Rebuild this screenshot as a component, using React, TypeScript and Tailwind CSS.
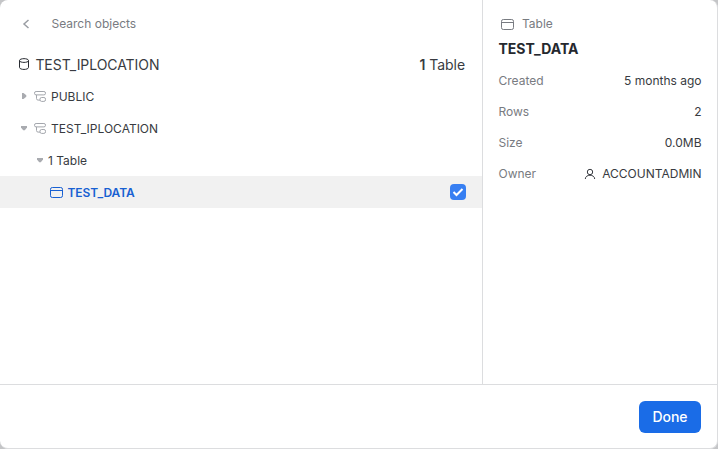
import type { ReactNode } from "react";

function TableIcon({ className }: { className?: string }) {
  return (
    <svg width="13" height="11" viewBox="0 0 13 11" fill="none" stroke="currentColor" className={className}>
      <rect x="0.5" y="0.5" width="12" height="10" rx="1.8" />
      <path d="M0.5 3.5h12" />
    </svg>
  );
}

function SchemaIcon() {
  return (
    <svg width="12" height="11" viewBox="0 0 12 11" fill="none" stroke="#a3a6ac" className="block shrink-0">
      <rect x="0.5" y="0.5" width="11" height="3.4" rx="1.6" />
      <path d="M2.5 3.9v3.6a1.6 1.6 0 0 0 1.6 1.6H6" />
      <rect x="6" y="6.5" width="5.5" height="3.9" rx="1.6" />
    </svg>
  );
}

function Caret({ open }: { open?: boolean }) {
  return (
    <svg width="8" height="8" viewBox="0 0 8 8" fill="#a9abb0" className="shrink-0">
      {open ? <path d="M1 2h6v1.5L4.8 6.3H3.2L1 3.5z" /> : <path d="M2 1h1.5L6.3 3.2v1.6L3.5 7H2z" />}
    </svg>
  );
}

function Detail({ label, children }: { label: string; children: ReactNode }) {
  return (
    <div className="flex h-[31px] items-center justify-between">
      <span className="text-[#787b81]">{label}</span>
      <span className="flex items-center text-[#383b41]">{children}</span>
    </div>
  );
}

export default function App() {
  return (
    <div className="h-[449px] w-[718px] bg-[#c4c5c7] font-['Inter',sans-serif] text-[12px] leading-4 text-[#383b41]">
      <div className="flex h-full w-full flex-col overflow-hidden rounded-lg border-r border-b border-[#dcdddf] bg-white">
        <div className="flex h-[384px]">
          <main className="w-[482px]">
            <div className="flex h-12 items-center pl-[22px]">
              <svg width="8" height="10" viewBox="0 0 8 10" fill="none" stroke="#9a9da3" strokeWidth="1.5">
                <path d="M6.5 1 2 5l4.5 4" />
              </svg>
              <span className="ml-[21.5px] text-[#787b81]">Search objects</span>
            </div>
            <div className="flex h-8 items-center justify-between pr-[17px] pl-[18px] text-[14px] tracking-[-0.06px]">
              <span className="flex items-center">
                <svg width="12" height="12" viewBox="0 0 12 12" fill="none" stroke="#292c32">
                  <path d="M1.5 2.6C1.5 0 10.5 0 10.5 2.6v6.8c0 2.7-9 2.7-9 0zM1.5 2.6c0 2.4 9 2.4 9 0" />
                </svg>
                <span className="ml-[5.4px] pt-[2px]">TEST_IPLOCATION</span>
              </span>
              <span className="pt-[2px]"><b className="font-semibold">1</b> Table</span>
            </div>
            <div className="flex h-8 items-center pl-5">
              <Caret /><span className="ml-[6px]"><SchemaIcon /></span>
              <span className="ml-[5px] pt-[2px]">PUBLIC</span>
            </div>
            <div className="flex h-8 items-center pl-5">
              <Caret open /><span className="ml-[6px]"><SchemaIcon /></span>
              <span className="ml-[5px] pt-[2px]">TEST_IPLOCATION</span>
            </div>
            <div className="flex h-8 items-center pl-9">
              <Caret open /><span className="ml-[4px] pt-[2px]">1 Table</span>
            </div>
            <div className="flex h-8 items-center bg-[#f1f1f1] pr-4 pl-[50px] font-semibold text-[#1860d2]">
              <TableIcon />
              <span className="ml-[4.4px] pt-[2px] tracking-[-0.05px]">TEST_DATA</span>
              <span className="ml-auto flex h-4 w-4 items-center justify-center rounded-[4px] bg-[#377ff2]">
                <svg width="12" height="10" viewBox="0 0 12 10" fill="none" stroke="white" strokeWidth="2">
                  <path d="m1.5 5 3 3 6-6" />
                </svg>
              </span>
            </div>
          </main>
          <aside className="flex-1 border-l border-[#dcdddf] pr-[15.5px] pl-[15.5px]">
            <div className="flex h-[39px] items-center pt-[9px] text-[#787b81]">
              <TableIcon className="ml-[2.5px]" />
              <span className="ml-2">Table</span>
            </div>
            <h2 className="mb-[6px] h-5 text-[14px] leading-5 font-bold text-[#25282e]">TEST_DATA</h2>
            <Detail label="Created">5 months ago</Detail>
            <Detail label="Rows">2</Detail>
            <Detail label="Size">0.0MB</Detail>
            <Detail label="Owner">
              <svg width="12" height="12" viewBox="0 0 12 12" fill="none" stroke="currentColor" className="mr-[6px]">
                <circle cx="6" cy="4" r="2.7" />
                <path d="M1.3 11c0-5 9.4-5 9.4 0" />
              </svg>
              ACCOUNTADMIN
            </Detail>
          </aside>
        </div>
        <footer className="flex flex-1 items-center justify-end border-t border-[#dcdddf] pr-4">
          <button className="h-8 w-[62px] rounded-md bg-[#1a6ce7] text-[14px] font-medium text-white">Done</button>
        </footer>
      </div>
    </div>
  );
}
